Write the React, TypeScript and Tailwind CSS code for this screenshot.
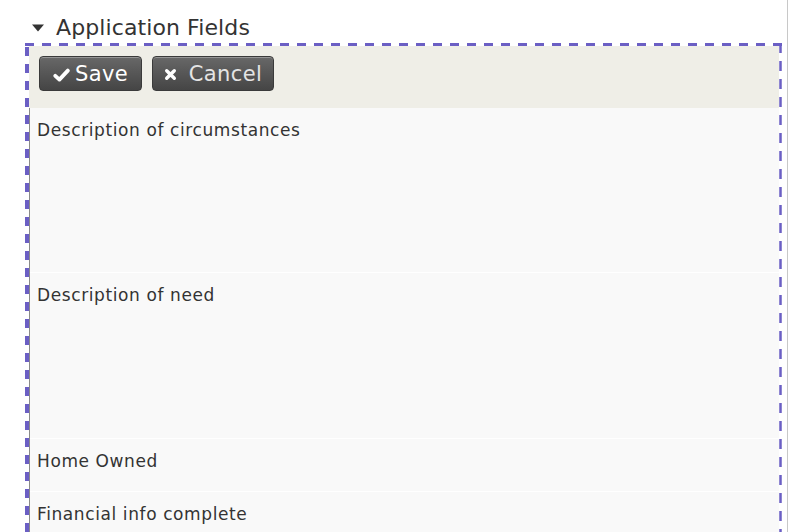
import React from "react";

const rows = [
  { label: "Description of circumstances", h: "h-[165px]" },
  { label: "Description of need", h: "h-[166px]" },
  { label: "Home Owned", h: "h-[53px]" },
  { label: "Financial info complete", h: "h-[53px]" },
];

function Check() {
  return (
    <svg width="17" height="14" viewBox="0 0 17 14" className="shrink-0">
      <path d="M2.3 7.8 L6.4 11.6 L14.8 2.6" fill="none" stroke="white" strokeWidth="3.8" strokeLinecap="round" strokeLinejoin="round" />
    </svg>
  );
}

function Cross() {
  return (
    <svg width="13" height="13" viewBox="0 0 13 13" className="shrink-0">
      <path d="M2.7 2.7 L10.3 10.3 M10.3 2.7 L2.7 10.3" stroke="white" strokeWidth="3.4" strokeLinecap="round" />
    </svg>
  );
}

// dashed selection outline, drawn over the panel edges
function DashedOutline() {
  const c = "#6b5fc4";
  return (
    <svg width="757" height="500" className="pointer-events-none absolute left-0 top-0">
      <line x1="0" y1="1.5" x2="757" y2="1.5" stroke={c} strokeWidth="3" strokeDasharray="9 8" />
      <line x1="2" y1="0" x2="2" y2="500" stroke={c} strokeWidth="4" strokeDasharray="9 8" strokeDashoffset="-4" />
      <line x1="755.5" y1="0" x2="755.5" y2="500" stroke={c} strokeWidth="2.5" strokeDasharray="10 8" />
    </svg>
  );
}

export default function App() {
  return (
    <div className="h-[532px] w-[800px] overflow-hidden bg-white font-['DejaVu_Sans',sans-serif] text-[#333]">
      <div className="h-full w-[788px] border-r border-[#c8c8c8]">
        <div className="flex h-[43px] items-center pl-[31px] pt-[13px]">
          <svg width="14" height="8" viewBox="0 0 14 8" className="mr-[11px]">
            <path d="M1 0.5 L13 0.5 L7 7.5 Z" fill="#333" />
          </svg>
          <span className="text-[22px] leading-none tracking-[0.1px]">Application Fields</span>
        </div>
        <div className="relative ml-[25px] w-[757px] pl-[4px] pr-[3px] pt-[3px]">
          <div className="flex h-[62px] gap-[10px] bg-[#efeee7] px-[10px] pt-[10px]">
            <button className="flex h-[35px] w-[103px] items-center justify-center gap-[5px] rounded-[4px] border border-[#3a3a3a] bg-gradient-to-b from-[#686868] to-[#454545] pt-[2px] text-[21px] tracking-[0.4px] text-white shadow-[inset_0_1px_0_rgba(255,255,255,0.3)]">
              <Check />
              Save
            </button>
            <button className="flex h-[35px] w-[122px] items-center justify-center gap-[12px] rounded-[4px] border border-[#3a3a3a] bg-gradient-to-b from-[#686868] to-[#454545] pt-[2px] text-[21px] tracking-[0.4px] text-[#e4e4e4] shadow-[inset_0_1px_0_rgba(255,255,255,0.3)]">
              <Cross />
              Cancel
            </button>
          </div>
          <div className="border-l border-[#8a8a8a]">
            {rows.map((r) => (
              <div key={r.label} className={`${r.h} border-b border-white bg-[#f9f9f9] px-[7px] pt-[11px] text-[17px] leading-[22px] tracking-[0.6px]`}>
                {r.label}
              </div>
            ))}
          </div>
          <DashedOutline />
        </div>
      </div>
    </div>
  );
}
